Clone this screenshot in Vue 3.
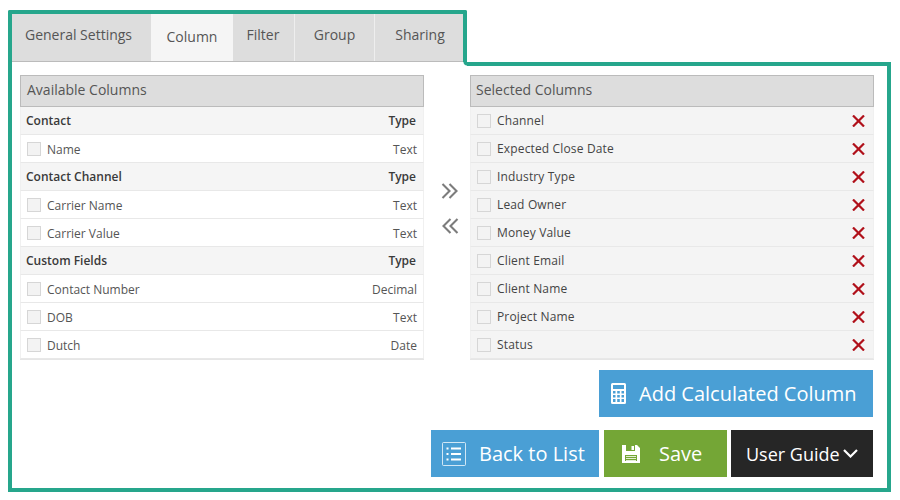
<template>
  <div class="page">
    <div class="frame">
      <!-- the strip below the tabs hides the panel's top border -->
      <div class="tabs">
        <div
          v-for="tab in tabs"
          :key="tab.name"
          class="tab"
          :class="[tab.cls, { active: tab.name === activeTab }]"
        >
          {{ tab.name }}
        </div>
      </div>

      <div class="panel">
        <div class="columns">
          <div class="col">
            <div class="col-head">Available Columns</div>
            <div
              v-for="row in available"
              :key="row.label"
              class="row"
              :class="row.group ? 'group' : 'item'"
            >
              <span v-if="!row.group" class="check"></span>
              <span class="label">{{ row.label }}</span>
              <span class="type">{{ row.type }}</span>
            </div>
          </div>

          <div class="mover">
            <svg width="18" height="16" viewBox="0 0 18 16" fill="none" stroke="#7c7c7c" stroke-width="2.1">
              <path d="M1.500 1 8.500 8 1.500 15" />
              <path d="M8.500 1 15.500 8 8.500 15" />
            </svg>
            <svg width="18" height="16" viewBox="0 0 18 16" fill="none" stroke="#7c7c7c" stroke-width="2.1">
              <path d="M9.500 1 2.500 8 9.500 15" />
              <path d="M16.500 1 9.500 8 16.500 15" />
            </svg>
          </div>

          <div class="col">
            <div class="col-head selected-head">Selected Columns</div>
            <div v-for="name in selected" :key="name" class="row picked">
              <span class="check"></span>
              <span class="label">{{ name }}</span>
              <svg class="remove" width="13" height="12" viewBox="0 0 13 12" fill="none" stroke="#b0101a" stroke-width="2.2">
                <path d="M1 .5 12 11.500M12 .5 1 11.500" />
              </svg>
            </div>
          </div>
        </div>

        <div class="actions">
          <button class="btn blue add">
            <svg width="15" height="21" viewBox="0 0 15 21" fill="#fff">
              <path fill-rule="evenodd" d="M1.500 0h12A1.500 1.500 0 0 1 15 1.500v18a1.500 1.500 0 0 1-1.500 1.500h-12A1.500 1.500 0 0 1 0 19.500v-18A1.500 1.500 0 0 1 1.500 0ZM2 2v4h11V2ZM2 8v2.500h2.500V8Zm4.200 0v2.500h2.600V8Zm4.300 0v2.500H13V8ZM2 12v2.500h2.500V12Zm4.200 0v2.500h2.600V12Zm4.300 0v2.500H13V12ZM2 16v3h2.500v-3Zm4.200 0v3h2.600v-3Zm4.300 0v3H13v-3Z" />
            </svg>
            Add Calculated Column
          </button>
          <div class="btn-row">
            <button class="btn blue back">
              <svg width="24" height="24" viewBox="0 0 24 24" fill="none" stroke="#fff">
                <rect x=".5" y=".5" width="23" height="23" rx="1" stroke-opacity=".75" />
                <path stroke-width="2" d="M9 6.500h10M9 12h10M9 17.500h10M4.500 6.500h2M4.500 12h2M4.500 17.500h2" />
              </svg>
              <span>Back to List</span>
            </button>
            <button class="btn green save">
              <svg width="18" height="18" viewBox="0 0 18 18" fill="#fff">
                <path fill-rule="evenodd" d="M0 0h15l3 3v15H0ZM4 0v6h9V0ZM3 10v6h12v-6Z" />
                <path d="M9.500 1h2.500v4H9.500Z" />
                <path fill-opacity=".8" d="M4 11h10v1H4ZM4 13h10v1H4ZM4 15h10v1H4Z" />
              </svg>
              <span>Save</span>
            </button>
            <button class="btn dark guide">
              User Guide
              <svg width="15" height="9" viewBox="0 0 15 9" fill="none" stroke="#fff" stroke-width="2.200">
                <path d="M1 1 7.500 7.500 14 1" />
              </svg>
            </button>
          </div>
        </div>
      </div>
    </div>
  </div>
</template>

<script setup>
const activeTab = 'Column'

const tabs = [
  { name: 'General Settings', cls: 'w-general' },
  { name: 'Column', cls: 'w-column' },
  { name: 'Filter', cls: 'w-filter' },
  { name: 'Group', cls: 'w-group' },
  { name: 'Sharing', cls: 'w-sharing' }
]

const available = [
  { label: 'Contact', type: 'Type', group: true },
  { label: 'Name', type: 'Text' },
  { label: 'Contact Channel', type: 'Type', group: true },
  { label: 'Carrier Name', type: 'Text' },
  { label: 'Carrier Value', type: 'Text' },
  { label: 'Custom Fields', type: 'Type', group: true },
  { label: 'Contact Number', type: 'Decimal' },
  { label: 'DOB', type: 'Text' },
  { label: 'Dutch', type: 'Date' }
]

const selected = [
  'Channel',
  'Expected Close Date',
  'Industry Type',
  'Lead Owner',
  'Money Value',
  'Client Email',
  'Client Name',
  'Project Name',
  'Status'
]
</script>

<style>
body {
  background: #fff;
}
</style>

<style scoped>
.page {
  width: 900px;
  height: 500px;
  box-sizing: border-box;
  padding: 10px 9px 0 8px;
  font-family: "Open Sans", "Liberation Sans", sans-serif;
  color: #444;
  overflow: hidden;
}

.tabs {
  position: relative;
  z-index: 1;
  display: flex;
  width: 459px;
  height: 52px;
  box-sizing: border-box;
  background: #ddd;
  border: 4px solid #26a68c;
  border-bottom: none;
  border-radius: 2px 2px 0 0;
  box-shadow: inset 0 -1px 0 #bbb;
}

/* white strip over the panel border, under the tabs */
.tabs::before {
  content: "";
  position: absolute;
  left: 0;
  top: 100%;
  width: 451px;
  height: 4px;
  background: #fff;
}

.tabs::after {
  content: "";
  position: absolute;
  left: 451px;
  top: 100%;
  width: 4px;
  height: 4px;
  background: radial-gradient(circle at 100% 0, #26a68c 3px, #fff 4px);
}

.tab {
  height: 47px;
  box-sizing: border-box;
  padding-top: 11px;
  font-size: 14px;
  text-align: center;
  color: #555;
  border-right: 1px solid #eee;
}

.tab.active {
  padding-top: 13px;
  background: #f5f5f5;
  border-right: none;
}

.w-general { width: 139px; padding-right: 6px; border-right: none; }
.w-column { width: 82px; }
.w-filter { width: 62px; padding-right: 1px; }
.w-group { width: 80px; }
.w-sharing { width: 88px; padding-left: 2px; border-right: none; }

.panel {
  height: 430px;
  box-sizing: border-box;
  padding: 9px 13px 0 8px;
  border: 4px solid #26a68c;
}

.columns {
  display: flex;
}

.col {
  width: 404px;
  border-bottom: 1px solid #e6e6e6;
}

.col-head {
  height: 32px;
  box-sizing: border-box;
  padding: 0 6px;
  line-height: 28px;
  font-size: 14px;
  color: #555;
  background: #ddd;
  border: 1px solid #bbb;
}

.selected-head {
  padding-left: 5px;
}

.row {
  display: flex;
  align-items: center;
  height: 28px;
  box-sizing: border-box;
  padding: 0 6px;
  font-size: 12px;
  border: 1px solid #f0f0f0;
  border-top: none;
  border-bottom-color: #e8e8e8;
}

.group {
  padding: 0 7px 0 5px;
  font-weight: 600;
  color: #3a3a3a;
  background: #f5f5f5;
}

.item {
  color: #555;
  background: #fff;
}

.item .label,
.item .type {
  padding-top: 1px;
}

.picked {
  color: #444;
  background: #f4f4f4;
}

.picked .label {
  font-weight: 500;
  letter-spacing: .15px;
}

.check {
  width: 14px;
  height: 14px;
  box-sizing: border-box;
  flex: none;
  margin-right: 6px;
  background: #f3f3f3;
  border: 1px solid #d6d6d6;
}

.label {
  flex: 1;
}

.mover {
  flex: 1;
  display: flex;
  flex-direction: column;
  align-items: center;
  justify-content: center;
  gap: 19px;
  padding: 0 0 19px 6px;
}

.remove {
  margin-right: 2px;
}

.actions {
  display: flex;
  flex-direction: column;
  align-items: flex-end;
  gap: 13px;
  margin: 10px 1px 0 0;
}

.btn-row {
  display: flex;
}

.btn {
  display: flex;
  align-items: center;
  height: 47px;
  box-sizing: border-box;
  padding: 0;
  border: none;
  font-family: inherit;
  font-size: 20px;
  color: #fff;
}

.blue { background: #4a9fd5; }
.green { background: #74a636; }
.dark { background: #262626; }

.add {
  width: 274px;
  padding-left: 12px;
  gap: 13px;
}

.back {
  width: 168px;
  padding-left: 11px;
  gap: 13px;
}

.save {
  width: 123px;
  margin-left: 5px;
  padding-left: 18px;
  gap: 19px;
}

.guide {
  width: 142px;
  margin-left: 4px;
  padding-left: 15px;
  gap: 3px;
  font-size: 18px;
}
</style>
